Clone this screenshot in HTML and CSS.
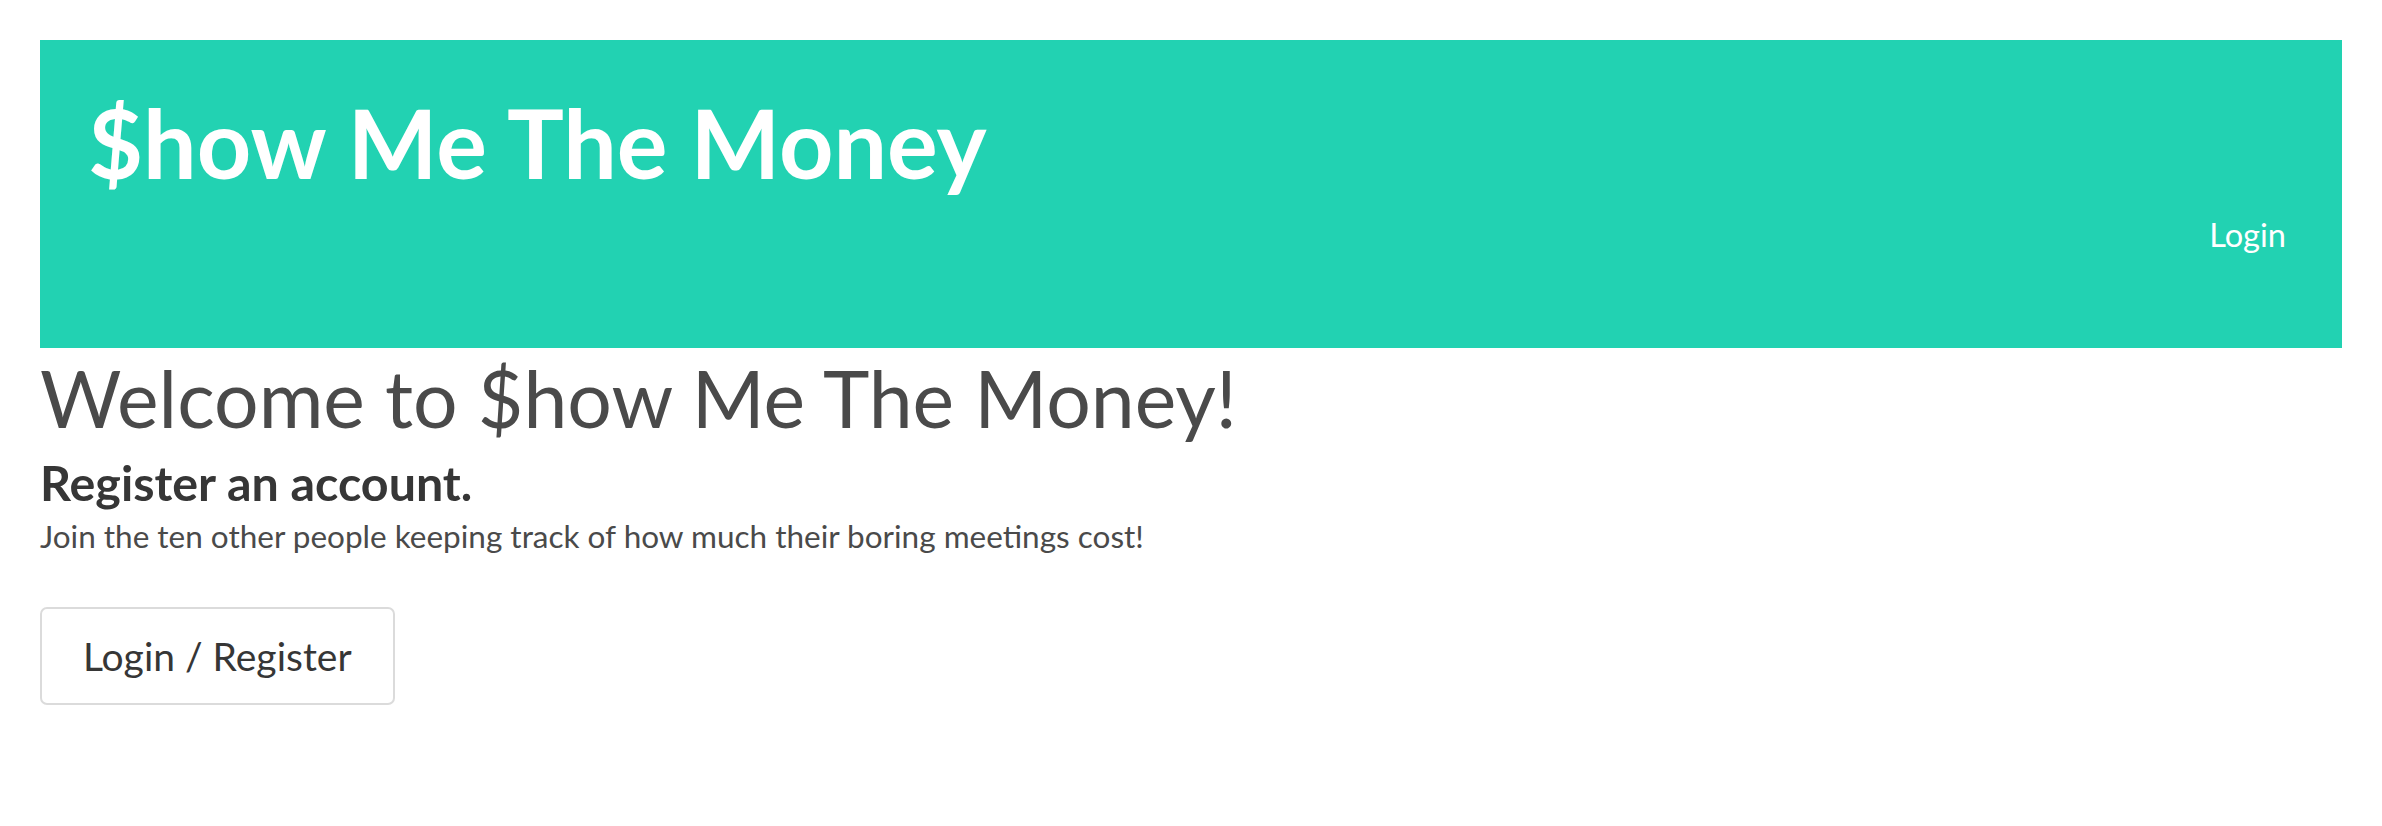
FILE: index.html
```html
<!DOCTYPE html>
<html lang="en">
<head>
<meta charset="utf-8">
<title>$how Me The Money</title>
<link rel="stylesheet" href="styles.css">
</head>
<body>
<header class="hero">
  <h1 class="brand">$how Me The Money</h1>
  <nav class="nav"><a class="nav-link" href="#">Login</a></nav>
</header>
<main class="content">
  <h1 class="welcome">Welcome to $how Me The Money!</h1>
  <h2 class="subtitle">Register an account.</h2>
  <p class="lead">Join the ten other people keeping track of how much their boring meetings cost!</p>
  <button class="button" type="button">Login / Register</button>
</main>
</body>
</html>
```
FILE: styles.css
```css
html, body {
  margin: 0;
  background: #fff;
}
body {
  padding: 40px;
  font-family: Lato, "Noto Sans", sans-serif;
  color: #4a4a4a;
}
.hero {
  background: #22d2b2;
  height: 308px;
  box-sizing: border-box;
  padding: 54.7px 56px 0 48px;
  display: flex;
  justify-content: space-between;
  align-items: flex-start;
}
.brand {
  margin: 0;
  font-size: 95px;
  line-height: 1;
  font-weight: 700;
  color: #fff;
}
.nav {
  margin-top: 124.3px;
}
.nav-link {
  color: #fff;
  text-decoration: none;
  font-size: 32.6px;
  line-height: 1;
  display: block;
}
.content {
  display: flex;
  flex-direction: column;
  align-items: flex-start;
}
.welcome {
  margin: 11.2px 0 0;
  font-size: 78.7px;
  line-height: 1;
  font-weight: 400;
  color: #4a4a4a;
}
.subtitle {
  margin: 20.2px 0 0;
  font-size: 48.4px;
  line-height: 1;
  font-weight: 700;
  color: #363636;
}
.lead {
  margin: 14.6px 0 0;
  font-size: 31.5px;
  line-height: 1;
  color: #4a4a4a;
}
.button {
  margin-top: 54.4px;
  height: 98px;
  box-sizing: border-box;
  padding: 0 41px;
  background: #fff;
  border: 2px solid #dbdbdb;
  border-radius: 7px;
  font-family: Lato, "Noto Sans", sans-serif;
  font-size: 39px;
  color: #363636;
  cursor: pointer;
}
```
